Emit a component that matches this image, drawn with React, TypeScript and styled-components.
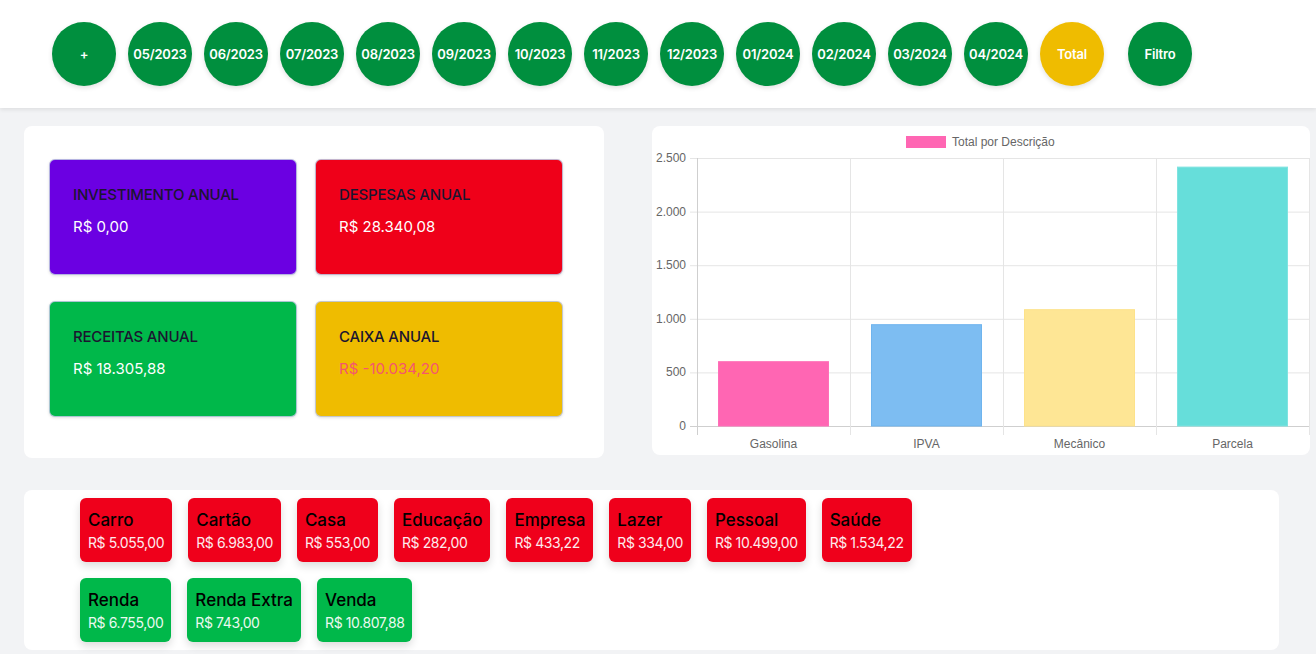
import React from "react";
import styled, { createGlobalStyle } from "styled-components";

const Global = createGlobalStyle`
  * { box-sizing: border-box; }
  html, body { margin: 0; padding: 0; background: #f2f3f5; }
  body { font-family: "Inter", "Open Sans", sans-serif; }
`;

const Page = styled.div`
  width: 1316px;
  min-height: 654px;
  display: flex;
  flex-direction: column;
`;

const Header = styled.header`
  background: #ffffff;
  height: 108px;
  padding: 22px 52px;
  display: flex;
  align-items: flex-start;
  gap: 12px;
  box-shadow: 0 2px 4px rgba(0, 0, 0, 0.08);
`;

const RoundButton = styled.button<{ $tone?: "green" | "yellow"; $gapBefore?: boolean }>`
  width: 64px;
  height: 64px;
  border-radius: 50%;
  border: none;
  flex-shrink: 0;
  padding: 0;
  background: ${(p) => (p.$tone === "yellow" ? "#efbc00" : "#008f3e")};
  color: #ffffff;
  font-family: "Inter", sans-serif;
  font-weight: 600;
  font-size: 13px;
  letter-spacing: -0.2px;
  box-shadow: 0 2px 5px rgba(0, 0, 0, 0.12);
  margin-left: ${(p) => (p.$gapBefore ? "12px" : "0")};
  display: flex;
  align-items: center;
  justify-content: center;
`;

const MainRow = styled.div`
  display: flex;
  padding: 18px 0 0 24px;
  gap: 48px;
  align-items: flex-start;
`;

const SummaryPanel = styled.section`
  width: 580px;
  height: 332px;
  background: #ffffff;
  border-radius: 8px;
  padding: 33px 25px;
  display: grid;
  grid-template-columns: 248px 248px;
  grid-auto-rows: 116px;
  column-gap: 18px;
  row-gap: 26px;
`;

const SummaryCard = styled.div<{ $bg: string }>`
  background: ${(p) => p.$bg};
  border-radius: 6px;
  border: 1px solid rgba(190, 200, 225, 0.9);
  box-shadow: 0 1px 3px rgba(0, 0, 0, 0.12);
  padding: 26px 23px;
  display: flex;
  flex-direction: column;
  gap: 14px;
`;

const CardTitle = styled.div`
  color: #1b1530;
  font-size: 15px;
  font-weight: 500;
  letter-spacing: -0.2px;
  line-height: 18px;
`;

const CardValue = styled.div<{ $color?: string }>`
  color: ${(p) => p.$color ?? "#ffffff"};
  font-size: 15px;
  font-weight: 400;
  line-height: 18px;
`;

const ChartPanel = styled.section`
  width: 658px;
  height: 329px;
  background: #ffffff;
  border-radius: 8px;
  overflow: hidden;
`;

const ChipPanel = styled.section`
  margin: 32px 0 0 24px;
  width: 1255px;
  height: 160px;
  background: #ffffff;
  border-radius: 8px;
  padding: 8px 56px;
  display: flex;
  flex-direction: column;
  gap: 16px;
`;

const ChipRow = styled.div`
  display: flex;
  gap: 16px;
`;

const Chip = styled.div<{ $kind: "out" | "in" }>`
  height: 64px;
  padding: 11px 8px 0 8px;
  border-radius: 6px;
  background: ${(p) => (p.$kind === "out" ? "#ef001b" : "#00b84a")};
  box-shadow: 0 4px 8px rgba(0, 0, 0, 0.14);
  display: flex;
  flex-direction: column;
  gap: 3px;
`;

const ChipTitle = styled.div`
  color: #000000;
  font-size: 17px;
  font-weight: 500;
  line-height: 22px;
  letter-spacing: 0;
`;

const ChipValue = styled.div`
  color: #ffffff;
  font-size: 14px;
  line-height: 18px;
  letter-spacing: -0.4px;
  opacity: 0.92;
`;

const months = [
  "05/2023", "06/2023", "07/2023", "08/2023", "09/2023", "10/2023", "11/2023",
  "12/2023", "01/2024", "02/2024", "03/2024", "04/2024",
];

const expenses = [
  ["Carro", "R$ 5.055,00"],
  ["Cartão", "R$ 6.983,00"],
  ["Casa", "R$ 553,00"],
  ["Educação", "R$ 282,00"],
  ["Empresa", "R$ 433,22"],
  ["Lazer", "R$ 334,00"],
  ["Pessoal", "R$ 10.499,00"],
  ["Saúde", "R$ 1.534,22"],
];

const incomes = [
  ["Renda", "R$ 6.755,00"],
  ["Renda Extra", "R$ 743,00"],
  ["Venda", "R$ 10.807,88"],
];

const bars = [
  { label: "Gasolina", value: 600, fill: "#ff66b3", stroke: "#ff6fb8" },
  { label: "IPVA", value: 945, fill: "#7dbdf2", stroke: "#6fb4ee" },
  { label: "Mecânico", value: 1085, fill: "#fee695", stroke: "#fde28a" },
  { label: "Parcela", value: 2415, fill: "#66deda", stroke: "#7fe3e0" },
];

function Chart() {
  const left = 45;
  const right = 657;
  const top = 32;
  const bottom = 300;
  const max = 2500;
  const colW = (right - left) / 4;
  const y = (v: number) => bottom - (v / max) * (bottom - top);
  const ticks = [0, 500, 1000, 1500, 2000, 2500];
  const fmt = (v: number) => v.toLocaleString("de-DE");
  return (
    <svg width="658" height="329" viewBox="0 0 658 329">
      <rect x="254" y="10" width="40" height="12" fill="#ff66b3" />
      <text x="300" y="20" fontSize="12" fill="#666" fontFamily="Liberation Sans, Arial, sans-serif">
        Total por Descrição
      </text>
      {ticks.map((t) => (
        <g key={t}>
          <line x1={left - 7} x2={right} y1={y(t) + 0.5} y2={y(t) + 0.5} stroke={t === 0 ? "#cfcfcf" : "#e5e5e5"} />
          <text x={left - 11} y={y(t) + 4} fontSize="12" fill="#666" textAnchor="end" fontFamily="Liberation Sans, Arial, sans-serif">
            {fmt(t)}
          </text>
        </g>
      ))}
      {[0, 1, 2, 3, 4].map((i) => (
        <line key={i} x1={left + i * colW + 0.5} x2={left + i * colW + 0.5} y1={top} y2={bottom + 9} stroke={i === 0 ? "#cfcfcf" : "#e5e5e5"} />
      ))}
      {bars.map((b, i) => {
        const cx = left + colW * i + colW / 2;
        const w = 110;
        return (
          <g key={b.label}>
            <rect x={cx - w / 2} y={y(b.value)} width={w} height={bottom - y(b.value)} fill={b.fill} stroke={b.stroke} strokeWidth="1" />
            <text x={cx} y="322" fontSize="12" fill="#666" textAnchor="middle" fontFamily="Liberation Sans, Arial, sans-serif">
              {b.label}
            </text>
          </g>
        );
      })}
    </svg>
  );
}

export default function App() {
  return (
    <Page>
      <Global />
      <Header>
        <RoundButton>+</RoundButton>
        {months.map((m) => (
          <RoundButton key={m}>{m}</RoundButton>
        ))}
        <RoundButton $tone="yellow">Total</RoundButton>
        <RoundButton $gapBefore>Filtro</RoundButton>
      </Header>
      <MainRow>
        <SummaryPanel>
          <SummaryCard $bg="#6b00e2">
            <CardTitle>INVESTIMENTO ANUAL</CardTitle>
            <CardValue>R$ 0,00</CardValue>
          </SummaryCard>
          <SummaryCard $bg="#ef0019">
            <CardTitle>DESPESAS ANUAL</CardTitle>
            <CardValue>R$ 28.340,08</CardValue>
          </SummaryCard>
          <SummaryCard $bg="#00b84a">
            <CardTitle>RECEITAS ANUAL</CardTitle>
            <CardValue>R$ 18.305,88</CardValue>
          </SummaryCard>
          <SummaryCard $bg="#efbc00">
            <CardTitle>CAIXA ANUAL</CardTitle>
            <CardValue $color="#f5566e">R$ -10.034,20</CardValue>
          </SummaryCard>
        </SummaryPanel>
        <ChartPanel>
          <Chart />
        </ChartPanel>
      </MainRow>
      <ChipPanel>
        <ChipRow>
          {expenses.map(([t, v]) => (
            <Chip key={t} $kind="out">
              <ChipTitle>{t}</ChipTitle>
              <ChipValue>{v}</ChipValue>
            </Chip>
          ))}
        </ChipRow>
        <ChipRow>
          {incomes.map(([t, v]) => (
            <Chip key={t} $kind="in">
              <ChipTitle>{t}</ChipTitle>
              <ChipValue>{v}</ChipValue>
            </Chip>
          ))}
        </ChipRow>
      </ChipPanel>
    </Page>
  );
}
